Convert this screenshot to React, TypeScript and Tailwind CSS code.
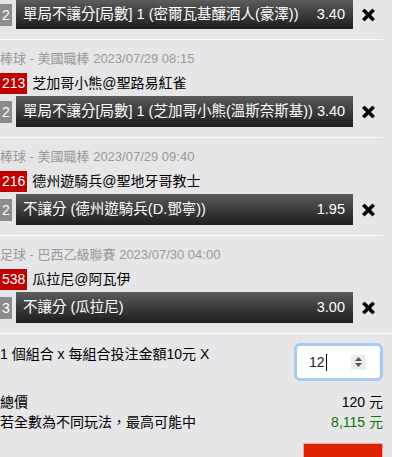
import React from "react";

type Bet = {
  header: string;
  code: string;
  teams: string;
  n: string;
  bet: string;
  odds: string;
};

const first = { n: "2", bet: "單局不讓分[局數] 1 (密爾瓦基釀酒人(豪澤))", odds: "3.40" };

const bets: Bet[] = [
  { header: "棒球 - 美國職棒 2023/07/29 08:15", code: "213", teams: "芝加哥小熊@聖路易紅雀", n: "2", bet: "單局不讓分[局數] 1 (芝加哥小熊(溫斯奈斯基))", odds: "3.40" },
  { header: "棒球 - 美國職棒 2023/07/29 09:40", code: "216", teams: "德州遊騎兵@聖地牙哥教士", n: "2", bet: "不讓分 (德州遊騎兵(D.鄧寧))", odds: "1.95" },
  { header: "足球 - 巴西乙級聯賽 2023/07/30 04:00", code: "538", teams: "瓜拉尼@阿瓦伊", n: "3", bet: "不讓分 (瓜拉尼)", odds: "3.00" },
];

function XIcon() {
  return (
    <svg width="15" height="14" viewBox="0 0 15 14" aria-hidden="true">
      <path
        d="M1.5 3 L3.5 1 L7.5 4.8 L11.5 1 L13.5 3 L9.6 7 L13.5 11 L11.5 13 L7.5 9.2 L3.5 13 L1.5 11 L5.4 7 Z"
        fill="#000"
        stroke="#000"
        strokeWidth="0.8"
        strokeLinejoin="round"
      />
    </svg>
  );
}

function BetRow({ n, bet, odds, cls }: { n: string; bet: string; odds: string; cls: string }) {
  return (
    <div className={"flex items-center " + cls}>
      <span className="w-[12px] h-[22px] leading-[22px] bg-[#8c8c8c] text-white text-[14px] text-center">{n}</span>
      <div className="ml-[4px] flex-1 h-full flex items-center justify-between pl-[7px] pr-[8px] text-white text-[14.5px] whitespace-nowrap bg-gradient-to-b from-[#5c5c5c] to-[#1e1e1e]">
        <span>{bet}</span>
        <span className="ml-[4px]">{odds}</span>
      </div>
      <div className="w-[30px] flex justify-center items-center">
        <XIcon />
      </div>
    </div>
  );
}

function Block({ b }: { b: Bet }) {
  return (
    <div className="border-t border-[#fafafa] pt-[9px] pb-[10px]">
      <div className="h-[20px] leading-[20px] text-[13px] text-[#999999] whitespace-nowrap">{b.header}</div>
      <div className="mt-[2px] h-[24px] flex items-center gap-[5px]">
        <span className="h-[21px] leading-[21px] px-[2px] bg-[#c00000] text-white text-[14px]">{b.code}</span>
        <span className="text-[14px] text-black whitespace-nowrap">{b.teams}</span>
      </div>
      <BetRow n={b.n} bet={b.bet} odds={b.odds} cls="mt-[1px] h-[31px]" />
    </div>
  );
}

export default function App() {
  return (
    <div className="w-[401px] h-[457px] overflow-hidden bg-white font-['Liberation_Sans','Noto_Sans_CJK_TC',sans-serif]">
      <div className="w-[392px] h-full bg-[#e6e6e8]">
        <div className="pr-[9px]">
          <div className="pb-[10px]">
            <BetRow n={first.n} bet={first.bet} odds={first.odds} cls="h-[29px]" />
          </div>
          {bets.map((b, i) => (
            <Block key={i} b={b} />
          ))}
        </div>
        <div className="border-t border-[#fafafa] pt-[9px] pr-[9px] flex flex-col text-[14px] text-black">
          <div className="flex justify-between items-start">
            <div className="mt-[1px] leading-[20px] whitespace-nowrap">1 個組合 x 每組合投注金額10元 X</div>
            <div className="w-[89px] h-[38px] rounded-[6px] border-[3px] border-[#a9cbf3] bg-white flex items-center pl-[12px] pr-[14px]">
              <span className="text-[14px] text-[#222]">12</span>
              <span className="w-px h-[17px] bg-black ml-px" />
              <div className="ml-auto w-[15px] h-[15px] bg-[#ededed] flex flex-col items-center justify-center gap-[2px]">
                <svg width="7" height="4" viewBox="0 0 7 4"><path d="M0 4 L3.5 0 L7 4 Z" fill="#555" /></svg>
                <svg width="7" height="4" viewBox="0 0 7 4"><path d="M0 0 L3.5 4 L7 0 Z" fill="#555" /></svg>
              </div>
            </div>
          </div>
          <div className="mt-[11px] flex justify-between leading-[20px]">
            <span>總價</span>
            <span>120 元</span>
          </div>
          <div className="flex justify-between leading-[20px]">
            <span>若全數為不同玩法，最高可能中</span>
            <span className="text-[#0a730a]">8,115 元</span>
          </div>
          <div className="mt-[11px] self-end w-[80px] h-[30px] bg-[#dd2200] border border-[#f5a0a0]" />
        </div>
      </div>
    </div>
  );
}
